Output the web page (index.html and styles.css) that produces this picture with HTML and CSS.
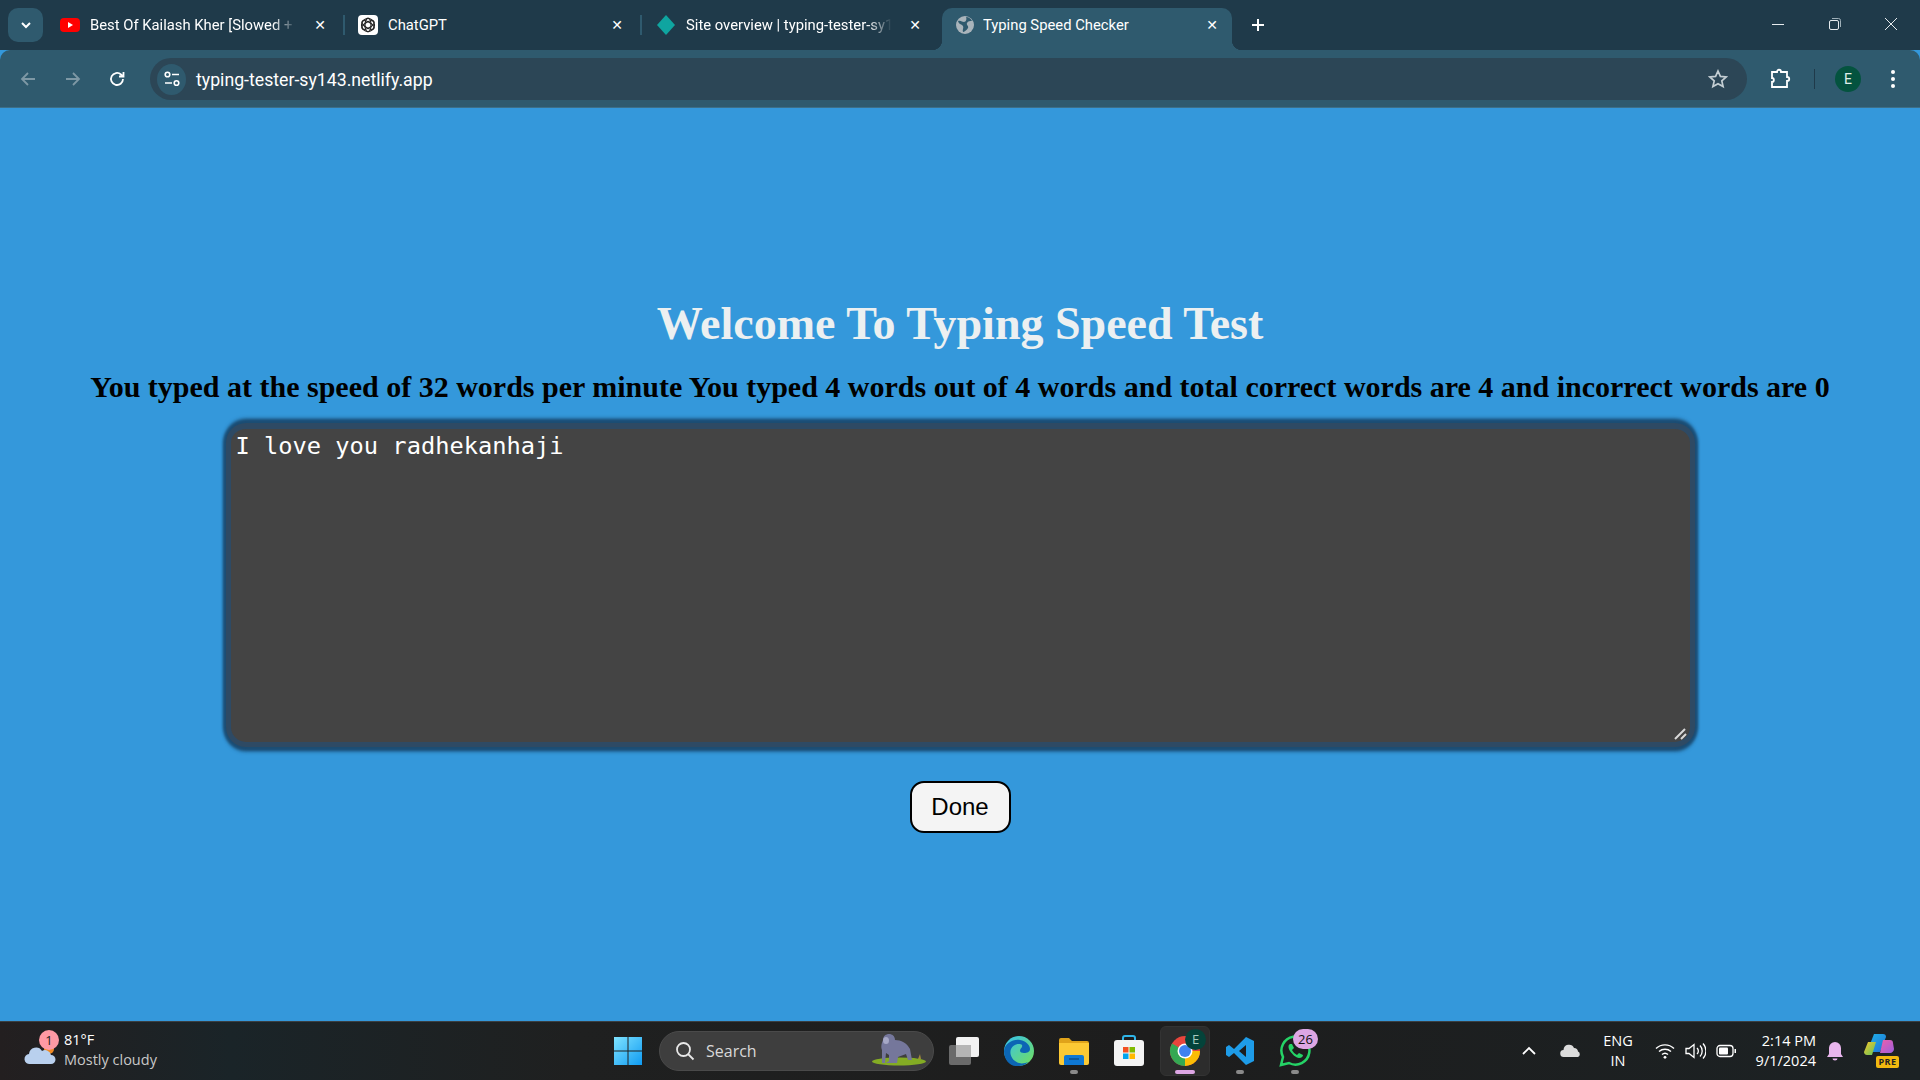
FILE: index.html
```html
<!doctype html>
<html lang="en">
<head>
    <meta charset="UTF-8">
    <title>Typing Speed Checker</title>
    <link rel="stylesheet" href="styles.css">
</head>
<body>

<div class="tab-strip">
    <button class="tab-search">
        <svg width="14" height="14" viewBox="0 0 14 14"><path d="M3 5l4 4 4-4" fill="none" stroke="#fff" stroke-width="2"/></svg>
    </button>
    <div class="tab tab-one">
        <svg class="favicon" viewBox="0 0 20 20"><rect y="3" width="20" height="14" rx="4" fill="#f00"/><path d="M8 7l5 3-5 3z" fill="#fff"/></svg>
        <span class="tab-title fade">Best Of Kailash Kher [Slowed + </span>
        <span class="tab-close">&#10005;</span>
    </div>
    <div class="tab-sep"></div>
    <div class="tab tab-two">
        <svg class="favicon" viewBox="0 0 20 20"><rect width="20" height="20" rx="4" fill="#fff"/><g fill="none" stroke="#222" stroke-width="1.2"><circle cx="10" cy="10" r="6.5"/><ellipse cx="10" cy="10" rx="6.8" ry="3" transform="rotate(30 10 10)"/><ellipse cx="10" cy="10" rx="6.8" ry="3" transform="rotate(90 10 10)"/><ellipse cx="10" cy="10" rx="6.8" ry="3" transform="rotate(150 10 10)"/></g></svg>
        <span class="tab-title">ChatGPT</span>
        <span class="tab-close">&#10005;</span>
    </div>
    <div class="tab-sep"></div>
    <div class="tab tab-three">
        <svg class="favicon" viewBox="0 0 20 20"><path d="M10 0l9 10-9 10-9-10z" fill="#0fa5a0"/></svg>
        <span class="tab-title fade">Site overview | typing-tester-sy1</span>
        <span class="tab-close">&#10005;</span>
    </div>
    <div class="tab tab-active">
        <svg class="favicon" viewBox="0 0 20 20"><circle cx="10" cy="10" r="9" fill="#a9b4bb"/><path d="M3 6c3-1 4 1 6 1s3-3 2-5c3 0 5 2 6 4-2 0-4 0-5 2s2 3 1 5-4 4-5 4c-1-2 1-4 0-6s-4-1-5-5z" fill="#2f5a6e"/></svg>
        <span class="tab-title">Typing Speed Checker</span>
        <span class="tab-close">&#10005;</span>
    </div>
    <span class="new-tab">
        <svg width="14" height="14" viewBox="0 0 14 14"><path d="M7 1v12M1 7h12" stroke="#fff" stroke-width="2"/></svg>
    </span>
    <div class="window-controls">
        <svg width="14" height="14" viewBox="0 0 14 14"><path d="M1 7.5h12" stroke="#e6ebee" stroke-width="1"/></svg>
        <svg width="14" height="14" viewBox="0 0 14 14"><rect x="1.5" y="3.5" width="9" height="9" rx="1.5" fill="none" stroke="#e6ebee"/><path d="M4 1.5h6.5a2 2 0 0 1 2 2V10" fill="none" stroke="#9fb0b9"/></svg>
        <svg width="14" height="14" viewBox="0 0 14 14"><path d="M1 1l12 12M13 1L1 13" stroke="#e6ebee" stroke-width="1"/></svg>
    </div>
</div>

<div class="toolbar">
    <div class="nav-buttons">
        <svg width="18" height="18" viewBox="0 0 18 18"><path d="M16 9H3M9 3L3 9l6 6" fill="none" stroke="#7e98a5" stroke-width="1.8"/></svg>
        <svg width="18" height="18" viewBox="0 0 18 18"><path d="M2 9h13M9 3l6 6-6 6" fill="none" stroke="#7e98a5" stroke-width="1.8"/></svg>
        <svg width="18" height="18" viewBox="0 0 18 18"><path d="M15 9a6 6 0 1 1-2-4.500L15 6.500M15.500 2v4.500H11" fill="none" stroke="#fff" stroke-width="1.8"/></svg>
    </div>
    <div class="omnibox">
        <span class="site-info">
            <svg width="18" height="18" viewBox="0 0 18 18"><g fill="none" stroke="#fff" stroke-width="1.6"><circle cx="4.500" cy="4.500" r="2.300"/><path d="M9 4.500h7M2 13h7"/><circle cx="13.500" cy="13" r="2.300"/></g></svg>
        </span>
        <span class="url">typing-tester-sy143.netlify.app</span>
        <svg class="star" width="20" height="20" viewBox="0 0 20 20"><path d="M10 2l2.400 5.400 5.800.6-4.400 3.900 1.300 5.700L10 14.700l-5.100 2.900 1.300-5.700L1.800 8l5.800-.6z" fill="none" stroke="#c4ced3" stroke-width="1.700"/></svg>
    </div>
    <div class="toolbar-right">
        <svg width="22" height="22" viewBox="0 0 22 22"><path d="M2 4h5c0-3 4-3 4 0h6v5c3 0 3 4 0 4v6H2v-5c2.500 0 2.500-4 0-4z" fill="none" stroke="#fff" stroke-width="1.800"/></svg>
        <span class="toolbar-sep"></span>
        <span class="profile">E</span>
        <svg width="6" height="20" viewBox="0 0 6 20"><circle cx="3" cy="3" r="2" fill="#fff"/><circle cx="3" cy="10" r="2" fill="#fff"/><circle cx="3" cy="17" r="2" fill="#fff"/></svg>
    </div>
</div>

<main class="page">
    <h1>Welcome To Typing Speed Test</h1>
    <h2>You typed at the speed of 32 words per minute You typed 4 words out of 4 words and total correct words are 4 and incorrect words are 0</h2>
    <div class="type-wrap">
        <textarea class="type-box" spellcheck="false">I love you radhekanhaji</textarea>
        <svg class="grip" width="13" height="12" viewBox="0 0 13 12"><path d="M1 11L11 1M7 11l5-5" stroke="#d8d8d8" stroke-width="2" fill="none"/></svg>
    </div>
    <button class="done-btn">Done</button>
</main>

<footer class="taskbar">
    <div class="weather">
        <svg class="weather-icon" width="34" height="28" viewBox="0 0 34 28"><circle cx="25" cy="10" r="5" fill="#f08a24"/><path d="M6 25a5 5 0 0 1-1-10 7 7 0 0 1 13-3 6 6 0 0 1 9 4 4.500 4.500 0 0 1 0 9z" fill="#b9d0ee"/></svg>
        <span class="weather-badge">1</span>
        <div class="weather-text">
            <div class="temp">81°F</div>
            <div class="cond">Mostly cloudy</div>
        </div>
    </div>

    <div class="task-center">
        <div class="task-item">
            <svg width="30" height="30" viewBox="0 0 30 30"><defs><linearGradient id="win" x1="0" y1="0" x2="1" y2="1"><stop offset="0" stop-color="#7fe3ff"/><stop offset="1" stop-color="#0f9bf2"/></linearGradient></defs><path fill="url(#win)" d="M1 1h13.500v13.500H1zM15.500 1H29v13.500H15.500zM1 15.500h13.500V29H1zM15.500 15.500H29V29H15.500z"/></svg>
        </div>
        <div class="search-box">
            <svg width="20" height="20" viewBox="0 0 20 20"><circle cx="8.500" cy="8.500" r="6.500" fill="none" stroke="#e8e8e8" stroke-width="1.800"/><path d="M13 13l5.500 5.500" stroke="#e8e8e8" stroke-width="1.800"/></svg>
            <span class="search-label">Search</span>
            <svg class="gorilla" width="55" height="32" viewBox="0 0 55 32"><ellipse cx="27" cy="27.500" rx="27" ry="4" fill="#84ac24"/><path d="M46 25l2-5 1 5z" fill="#a08a3a"/><path d="M11 6c0-4 3-6 6-6s6 2 6 6c6 0 12 3 15 9l2 11h-4l-2-6-8 3-1 6h-11l3-2 0-6-3-2-1 10h-3l0-13c-1-3-1-5 1-10z" fill="#75779b"/><ellipse cx="14" cy="6.500" rx="3" ry="3.500" fill="#a6a8c6"/></svg>
        </div>
        <div class="task-item">
            <svg width="32" height="30" viewBox="0 0 32 30"><rect x="1" y="9" width="22" height="20" rx="2" fill="#6a6a6a"/><rect x="8" y="1" width="23" height="20" rx="2" fill="#f2f2f2"/><rect x="8" y="9" width="15" height="12" fill="#b5b5b5"/></svg>
        </div>
        <div class="task-item">
            <svg width="32" height="32" viewBox="0 0 32 32"><defs><linearGradient id="edge" x1="0" y1="0" x2="1" y2="1"><stop offset="0" stop-color="#35c1f1"/><stop offset="1" stop-color="#73e05a"/></linearGradient></defs><circle cx="16" cy="16" r="15" fill="url(#edge)"/><path d="M1 16C2 8 10 4 17 5c6 1 10 5 10 9 0 3-3 4-6 4-2 0-4-1-4-2 0-3 3-3 2-6-2-2-9-1-11 4-2 5 1 12 8 14 3 1 7 0 9-1-3 4-8 4-12 4C6 31 1 24 1 16z" fill="#0c66b5"/></svg>
        </div>
        <div class="task-item has-dot">
            <svg width="32" height="28" viewBox="0 0 32 28"><path d="M1 3a2 2 0 0 1 2-2h8l3 3h15a2 2 0 0 1 2 2v3H1z" fill="#e0a31a"/><path d="M1 6h30v20a2 2 0 0 1-2 2H3a2 2 0 0 1-2-2z" fill="#fcc934"/><path d="M6 20a2 2 0 0 1 2-2h16a2 2 0 0 1 2 2v8H6z" fill="#0f78d4"/><path d="M11 22h10" stroke="#0a4f8f" stroke-width="1.500"/></svg>
        </div>
        <div class="task-item">
            <svg width="30" height="32" viewBox="0 0 30 32"><path d="M9 7V3a2 2 0 0 1 2-2h8a2 2 0 0 1 2 2v4" fill="none" stroke="#2fb5e8" stroke-width="2"/><rect y="5" width="30" height="26" rx="3" fill="#f4f4f4"/><path d="M9 12h5.500v5.500H9z" fill="#f25022"/><path d="M15.500 12H21v5.500h-5.500z" fill="#7fba00"/><path d="M9 18.500h5.500V24H9z" fill="#00a4ef"/><path d="M15.500 18.500H21V24h-5.500z" fill="#ffb900"/></svg>
        </div>
        <div class="task-item task-active">
            <svg width="32" height="32" viewBox="0 0 32 32"><circle cx="16" cy="16" r="15" fill="#e8453c"/><path d="M16 16L3 8.500A15 15 0 0 0 16 31z" fill="#34a853"/><path d="M16 16h15A15 15 0 0 1 16 31z" fill="#fbbc05"/><circle cx="16" cy="16" r="7.500" fill="#fff"/><circle cx="16" cy="16" r="6" fill="#3f82f0"/></svg>
            <span class="chrome-badge">E</span>
        </div>
        <div class="task-item has-dot">
            <svg width="30" height="30" viewBox="0 0 30 30"><path d="M21 1l8 4v20l-8 4L9 17l-5 4-3-2v-8l3-2 5 4zM21 9l-7 6 7 6z" fill="#1e9ce8" fill-rule="evenodd"/></svg>
        </div>
        <div class="task-item has-dot">
            <svg width="32" height="32" viewBox="0 0 32 32"><path d="M2 30l2-8a14 14 0 1 1 6 6z" fill="none" stroke="#25d366" stroke-width="2.500"/><path d="M11 9c-2 1-2 4 0 7s6 7 9 7 4-2 4-3l-4-2-2 2c-2-1-4-3-5-5l2-2-2-4z" fill="#25d366"/></svg>
            <span class="whatsapp-badge">26</span>
        </div>
    </div>

    <div class="tray">
        <svg class="tray-chevron" width="16" height="10" viewBox="0 0 16 10"><path d="M2 8l6-6 6 6" fill="none" stroke="#fff" stroke-width="1.800"/></svg>
        <svg class="tray-cloud" width="22" height="14" viewBox="0 0 22 14"><path d="M4 13a3.500 3.500 0 0 1-.5-7A5.500 5.500 0 0 1 14 4a4 4 0 0 1 4 3.500 3 3 0 0 1 0 5.500z" fill="#dcdcdc"/></svg>
        <div class="tray-lang">ENG<br>IN</div>
        <svg class="tray-wifi" width="20" height="16" viewBox="0 0 20 16"><g fill="none" stroke="#fff" stroke-width="1.400"><path d="M1 5.500a13 13 0 0 1 18 0"/><path d="M4 8.500a9 9 0 0 1 12 0"/><path d="M7 11.500a4.500 4.500 0 0 1 6 0"/></g><circle cx="10" cy="14.300" r="1.400" fill="#fff"/></svg>
        <svg class="tray-sound" width="21" height="18" viewBox="0 0 21 18"><g fill="none" stroke="#fff" stroke-width="1.300"><path d="M1 6.500h3L9 2.500v13l-5-4H1z"/><path d="M12 6a4 4 0 0 1 0 6"/><path d="M15 3.500a8 8 0 0 1 0 11"/><path d="M18 1.500a11 11 0 0 1 0 15"/></g></svg>
        <svg class="tray-battery" width="21" height="14" viewBox="0 0 21 14"><rect x="1" y="1.500" width="16" height="11" rx="3" fill="none" stroke="#fff" stroke-width="1.300"/><rect x="3" y="3.500" width="9" height="7" rx="1" fill="#fff"/><path d="M18.500 5h1.500v4h-1.500z" fill="#fff"/></svg>
        <div class="tray-clock">2:14 PM<br>9/1/2024</div>
        <svg class="tray-bell" width="18" height="20" viewBox="0 0 18 20"><path d="M9 1a6 6 0 0 1 6 6v6l2 3H1l2-3V7a6 6 0 0 1 6-6z" fill="#e9b6ee"/><path d="M6.500 17.500h5a2.500 2 0 0 1-5 0z" fill="#e9b6ee"/></svg>
        <div class="copilot">
            <svg width="30" height="26" viewBox="0 0 30 26"><defs><linearGradient id="cop1" x1="0" y1="0" x2="1" y2="1"><stop offset="0" stop-color="#1fb6e8"/><stop offset="1" stop-color="#1f6fd6"/></linearGradient><linearGradient id="cop2" x1="0" y1="0" x2="1" y2="1"><stop offset="0" stop-color="#f05fa8"/><stop offset="1" stop-color="#9a5fe0"/></linearGradient><linearGradient id="cop3" x1="0" y1="0" x2="1" y2="1"><stop offset="0" stop-color="#f8c52a"/><stop offset="1" stop-color="#5cc45c"/></linearGradient></defs><path d="M10 1h9c2 0 3 1 3 3l-6 15H3z" fill="url(#cop1)"/><path d="M4 9h8L8 22H3c-2 0-3-2-3-3z" fill="url(#cop3)"/><path d="M19 7h7c2 0 3 1 3 3l1 6c0 2-2 4-4 4H16z" fill="url(#cop2)"/></svg>
            <span class="pre-tag">PRE</span>
        </div>
    </div>
</footer>

</body>
</html>
```

FILE: styles.css
```css
* {
    box-sizing: border-box;
}

html,
body {
    height: 100%;
}

body {
    margin: 0;
    height: 1080px;
    overflow: hidden;
    display: flex;
    flex-direction: column;
    font-family: Roboto, "Liberation Sans", sans-serif;
    background-color: #3498db;
}

/* browser tabs */
.tab-strip {
    height: 50px;
    flex: none;
    display: flex;
    align-items: flex-end;
    background-color: #1f3a4a;
    color: #fff;
    padding-left: 8px;
}

.tab-search {
    width: 35px;
    height: 34px;
    margin-bottom: 8px;
    padding: 0;
    border: none;
    border-radius: 10px;
    background-color: #2f5a6e;
    display: flex;
    align-items: center;
    justify-content: center;
}

.tab {
    height: 42px;
    display: flex;
    align-items: center;
    flex: none;
    font-size: 14.800px;
    padding-bottom: 8px;
}

.tab-one {
    width: 300px;
    padding-left: 17px;
    padding-right: 8px;
}

.tab-two {
    width: 295px;
    padding-left: 13px;
    padding-right: 8px;
}

.tab-three {
    width: 300px;
    padding-left: 14px;
    padding-right: 12px;
}

.tab-active {
    width: 290px;
    padding-left: 13px;
    padding-right: 5px;
    background-color: #2f5a6e;
    border-radius: 10px 10px 0 0;
    position: relative;
}

.tab-active::before,
.tab-active::after {
    content: "";
    position: absolute;
    bottom: 0;
    width: 10px;
    height: 10px;
}

.tab-active::before {
    left: -10px;
    background: radial-gradient(circle at 0 0, #1f3a4a 10px, #2f5a6e 10.5px);
}

.tab-active::after {
    right: -10px;
    background: radial-gradient(circle at 100% 0, #1f3a4a 10px, #2f5a6e 10.5px);
}

.favicon {
    width: 20px;
    height: 20px;
    flex: none;
    margin-right: 10px;
}

.tab-active .favicon {
    margin-right: 8px;
}

.tab-title {
    flex: 1;
    min-width: 0;
    overflow: hidden;
    white-space: nowrap;
}

.fade {
    margin-right: 8px;
    -webkit-mask-image: linear-gradient(to right, #000 88%, transparent 100%);
    mask-image: linear-gradient(to right, #000 88%, transparent 100%);
}

.tab-close {
    flex: none;
    width: 30px;
    text-align: center;
    font-size: 14px;
    font-family: "DejaVu Sans", sans-serif;
    color: #fff;
}

.tab-sep {
    width: 2px;
    height: 20px;
    margin-bottom: 15px;
    background-color: #2f5a6e;
    flex: none;
}

.new-tab {
    width: 50px;
    height: 42px;
    padding-left: 19px;
    padding-bottom: 8px;
    display: flex;
    align-items: center;
}

.window-controls {
    margin-left: auto;
    height: 50px;
    width: 149px;
    padding-right: 22px;
    padding-bottom: 2px;
    display: flex;
    align-items: center;
    justify-content: space-between;
}

/* toolbar with address bar */
.toolbar {
    height: 58px;
    flex: none;
    background-color: #2f5a6e;
    border-radius: 10px 10px 0 0;
    border-bottom: 1px solid #3d6f88;
    display: flex;
    align-items: center;
    padding-left: 19px;
    padding-top: 1px;
}

.nav-buttons {
    width: 131px;
    padding-right: 24px;
    display: flex;
    justify-content: space-between;
}

.omnibox {
    width: 1597px;
    height: 42px;
    border-radius: 21px;
    background-color: #2c4656;
    display: flex;
    align-items: center;
    padding: 0 19px 0 7px;
    color: #fff;
}

.site-info {
    width: 29px;
    height: 31px;
    border-radius: 50%;
    background-color: #2f5a6e;
    display: flex;
    align-items: center;
    justify-content: center;
}

.url {
    margin-left: 10px;
    padding-top: 2px;
    font-size: 17.700px;
}

.star {
    margin-left: auto;
}

.toolbar-right {
    flex: 1;
    display: flex;
    align-items: center;
    padding-left: 23px;
    padding-right: 18px;
}

.toolbar-sep {
    width: 1px;
    height: 20px;
    margin-left: 22px;
    background-color: #1f3a4a;
}

.profile {
    width: 26px;
    height: 26px;
    margin-left: 20px;
    margin-right: 29px;
    border-radius: 50%;
    background-color: #04533f;
    color: #dfeee8;
    font-size: 14px;
    display: flex;
    align-items: center;
    justify-content: center;
}

/* page content */
.page {
    flex: 1;
    display: flex;
    flex-direction: column;
    align-items: center;
    padding-top: 188px;
    font-family: "Liberation Serif", serif;
}

h1 {
    margin: 0;
    font-size: 46px;
    line-height: 55px;
    font-weight: bold;
    color: #ecf0f1;
}

h2 {
    margin: 18px 0 0;
    font-size: 30px;
    line-height: 35px;
    font-weight: bold;
    color: #000;
    white-space: nowrap;
}

.type-wrap {
    width: 1469px;
    height: 324px;
    margin-top: 19px;
    position: relative;
}

.type-box {
    display: block;
    width: 100%;
    height: 100%;
    padding: 3px 5px 0 5px;
    border-style: solid;
    border-color: #2e4a64;
    border-width: 6px 5px 5px;
    border-radius: 20px;
    background-color: #444;
    color: #fff;
    font-family: "DejaVu Sans Mono", monospace;
    font-size: 23.700px;
    line-height: 28px;
    outline: none;
    resize: none;
    box-shadow: 0 0 3px 3px #1b4d74, 0 -4px 4px #1b4d74, 0 4px 4px #1b4d74;
}

.grip {
    position: absolute;
    right: 8px;
    bottom: 7px;
}

.done-btn {
    width: 101px;
    height: 52px;
    margin-top: 34px;
    border: 2px solid #000;
    border-radius: 14px;
    background-color: #f4f4f4;
    color: #000;
    font-family: "Liberation Sans", sans-serif;
    font-size: 24px;
    padding: 0;
}

/* windows taskbar */
.taskbar {
    height: 59px;
    flex: none;
    display: flex;
    align-items: center;
    justify-content: space-between;
    border-top: 1px solid #3a3f42;
    background: linear-gradient(to right, #231f20 0%, #1a2428 12%, #1f2020 30%, #1d1d1d 60%, #1c2224 100%);
    color: #fff;
    font-family: "Open Sans", "Liberation Sans", sans-serif;
}

.weather {
    width: 590px;
    display: flex;
    align-items: center;
    padding-left: 24px;
    position: relative;
}

.weather-icon {
    margin-top: 4px;
}

.weather-badge {
    position: absolute;
    left: 39px;
    top: -2px;
    width: 20px;
    height: 20px;
    border-radius: 50%;
    background-color: #ff99a4;
    color: #222;
    font-size: 13px;
    text-align: center;
    line-height: 20px;
}

.weather-text {
    margin-left: 6px;
    margin-top: -2px;
    font-size: 14.500px;
    line-height: 20px;
}

.cond {
    color: #c8c8c8;
}

.task-center {
    position: absolute;
    left: 600px;
    display: flex;
    align-items: center;
}

.task-item {
    width: 55px;
    height: 44px;
    flex: none;
    display: flex;
    align-items: center;
    justify-content: center;
    position: relative;
}

.task-item.has-dot::after,
.task-active::after {
    content: "";
    position: absolute;
    bottom: -1px;
    left: 24px;
    width: 8px;
    height: 4px;
    border-radius: 2px;
    background-color: #8a8a8a;
}

.task-active {
    background-color: #2c2c2c;
    border-radius: 6px;
    width: 50px;
    height: 50px;
    margin: 0 2px 0 4px;
    border: 1px solid #333;
}

.task-active::after {
    left: 14px;
    bottom: 1px;
    width: 20px;
    background-color: #dda6e4;
}

.chrome-badge {
    position: absolute;
    right: 3px;
    top: 2px;
    width: 21px;
    height: 21px;
    border-radius: 50%;
    background-color: #04433a;
    color: #a8c9bf;
    font-size: 13px;
    text-align: center;
    line-height: 21px;
}

.whatsapp-badge {
    position: absolute;
    right: 4px;
    top: 0;
    width: 25px;
    height: 20px;
    border-radius: 10px;
    background-color: #dda6e4;
    color: #111;
    font-size: 13px;
    text-align: center;
    line-height: 20px;
}

.search-box {
    width: 275px;
    height: 40px;
    margin: 0 2px 0 4px;
    flex: none;
    border-radius: 20px;
    border: 1px solid #4a4a4a;
    background-color: #3e3e3e;
    display: flex;
    align-items: center;
    padding-left: 15px;
    position: relative;
    color: #d8d8d8;
    font-size: 16px;
}

.search-label {
    margin-left: 11px;
}

.gorilla {
    position: absolute;
    right: 6px;
    top: 2px;
}

.tray {
    display: flex;
    align-items: center;
    font-size: 14.500px;
    line-height: 20px;
}

.tray-chevron {
    margin-right: 23px;
}

.tray-cloud {
    margin-right: 20px;
}

.tray-lang {
    width: 32px;
    text-align: center;
    margin-right: 21px;
}

.tray-wifi {
    margin-right: 10px;
}

.tray-sound {
    margin-right: 10px;
}

.tray-battery {
    margin-right: 7px;
}

.tray-clock {
    width: 72px;
    text-align: right;
    margin-right: 10px;
}

.tray-bell {
    margin-right: 20px;
}

.copilot {
    width: 38px;
    height: 36px;
    margin-right: 18px;
    position: relative;
}

.pre-tag {
    position: absolute;
    right: 3px;
    bottom: 1px;
    width: 23px;
    height: 12px;
    border-radius: 2px;
    background-color: #f2b90f;
    color: #222;
    font-size: 9px;
    font-weight: bold;
    line-height: 12px;
    text-align: center;
    letter-spacing: 0.5px;
}
```
